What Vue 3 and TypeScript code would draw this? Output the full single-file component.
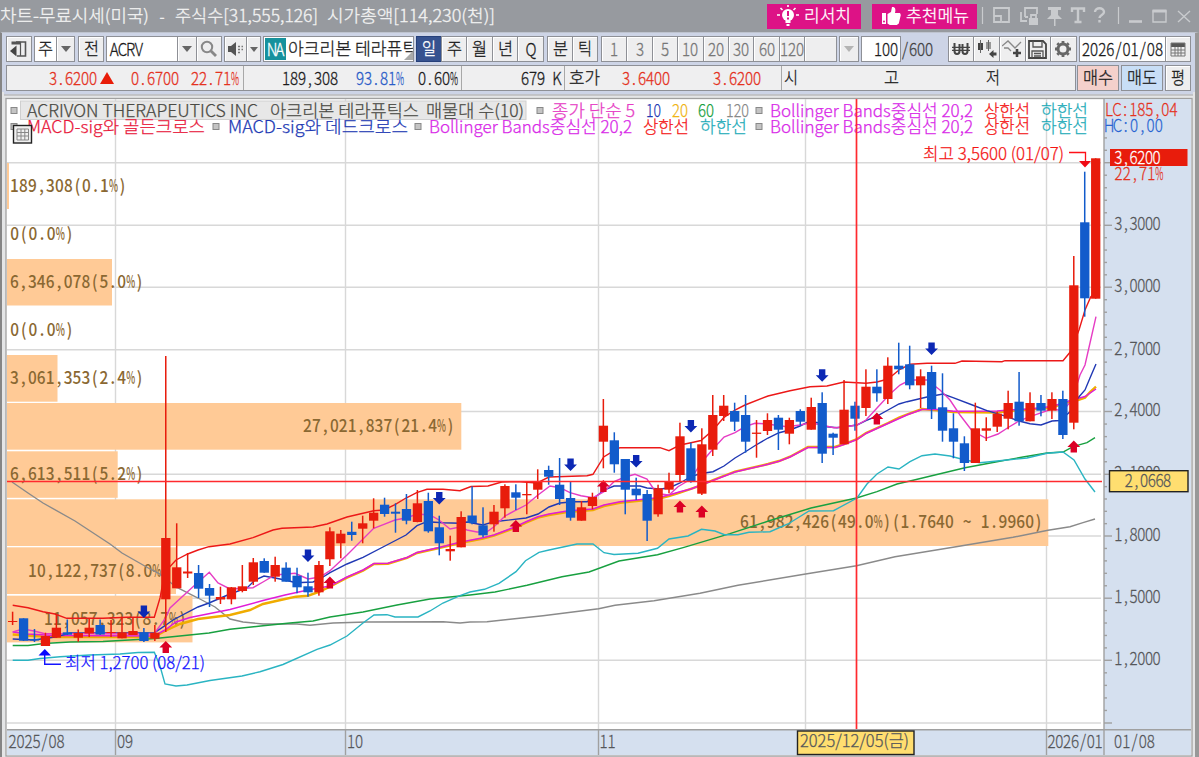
<script setup lang="ts">
import { h, type FunctionalComponent } from 'vue'

/* Half-width text: every character sits in its own equal cell. */
interface MonoProps { t: string; x?: number; y: number; w: number; k?: number }
const Mono: FunctionalComponent<MonoProps> = (p) => {
  const k = p.k ?? 0.84
  const cell = p.w / p.t.length / k
  let at = 0
  const runs = p.t.split(/(%)/).filter(Boolean).map((run) => {
    const start = at
    at += run.length
    if (run === '%') return h('text', { x: start * cell, y: 0, textLength: cell, lengthAdjust: 'spacingAndGlyphs' }, run)
    const xs = [...run].map((_, i) => ((start + i + 0.5) * cell).toFixed(2)).join(' ')
    return h('text', { x: xs, y: 0, 'text-anchor': 'middle' }, run)
  })
  return h('g', { transform: `translate(${p.x ?? 0} ${p.y}) scale(${k} 1)` }, runs)
}
Mono.props = ['t', 'x', 'y', 'w', 'k']

/* Text squeezed to a fixed advance inside the toolbars. */
interface FitProps { t: string; w: number; s?: number; ml?: number }
const Fit: FunctionalComponent<FitProps> = (p) => {
  const ascii = /^[\x20-\x7e]+$/.test(p.t)
  const s = p.s ?? (ascii ? 18 : 17)
  return h('svg', { class: 'fit', width: p.w, height: 20, 'font-size': s, style: { marginLeft: (p.ml ?? 0) + 'px' } }, [
    ascii
      ? h(Mono, { t: p.t, y: 10 + s * 0.365, w: p.w })
      : h('text', { x: 0, y: 10 + s * 0.37, textLength: p.w, lengthAdjust: 'spacingAndGlyphs' }, p.t),
  ])
}
Fit.props = ['t', 'w', 's', 'ml']

const periods = [
  { t: '주', w: 25 }, { t: '월', w: 26 }, { t: '년', w: 25 }, { t: 'Q', w: 26 },
]
const minutes = ['1', '3', '5', '10', '20', '30', '60', '120']

const STEP = 10.94
const X0 = 12.6
const cx = (i: number) => X0 + i * STEP

/* direction, high, low, body top, body bottom */
type Candle = [string, number, number, number, number]
const candles: Candle[] = [
  ['r', 611.7, 625, 621, 622], ['b', 618.3, 641, 618.3, 640.7], ['b', 629, 642, 639, 640.5], ['r', 632.7, 646, 636, 646],
  ['r', 614, 638, 627.7, 637.7], ['b', 619.5, 635, 632.3, 634.7], ['r', 629.5, 641.7, 633, 637.7], ['r', 618.5, 637, 627.7, 633.5],
  ['b', 619.5, 635, 625, 634.5], ['r', 620, 637, 632, 633], ['r', 617, 638.3, 632.3, 638.3], ['r', 618, 635, 631, 635],
  ['b', 628, 642, 632.3, 641], ['r', 625, 641, 632.7, 638.7], ['r', 356, 632, 538, 599.3], ['r', 523.3, 588.3, 567.3, 588.3],
  ['r', 553, 578, 571.5, 573.5], ['b', 565, 598, 573, 588.7], ['b', 584, 607, 588, 595.7], ['r', 586.7, 604, 597, 599.5],
  ['r', 587, 604.3, 587.3, 599.3], ['r', 565, 592.3, 586.3, 591], ['r', 558, 585, 562.3, 581.7], ['b', 558.3, 572.7, 561, 572.7],
  ['r', 556.7, 581.7, 565, 576.7], ['b', 562.3, 581.7, 567.7, 581.7], ['b', 567.7, 593.3, 575.7, 587.3], ['b', 572.7, 596.7, 586.3, 592.3],
  ['r', 561, 595.7, 565, 592.3], ['r', 527.3, 566, 531.3, 559.3], ['r', 530, 558.3, 533.7, 543.3], ['b', 521.7, 540.7, 531.8, 535],
  ['r', 515.7, 543.3, 523.3, 528.7], ['r', 498.3, 528.3, 512.7, 520.7], ['b', 497.7, 516.7, 504.7, 514], ['b', 503.3, 532.7, 511.7, 513.7],
  ['b', 494, 524.3, 509, 520.7], ['r', 490, 522.3, 503.3, 522], ['b', 492.7, 532.7, 501, 531.3], ['b', 515.7, 555.3, 527.3, 543.3],
  ['r', 535.7, 560.7, 549, 551.3], ['r', 511.3, 547.3, 517, 547.3], ['b', 486.3, 524.3, 515.5, 523], ['b', 507.3, 537.3, 525.3, 535.3],
  ['r', 505, 531.7, 511.7, 524.3], ['r', 484.3, 517.7, 486, 508.3], ['b', 484.3, 510, 492.3, 497.7], ['r', 481.7, 514.3, 494, 495.3],
  ['r', 469.3, 499, 482, 489.7], ['b', 465.7, 484.7, 470, 476.7], ['b', 458, 505, 484.7, 499], ['b', 481, 520.7, 498, 517.7],
  ['r', 501, 520.7, 507.3, 520.7], ['r', 492.7, 509.3, 497, 506], ['r', 399, 468.3, 425.7, 441.7], ['b', 432.3, 472.7, 440.3, 464.3],
  ['b', 459, 514.3, 459, 489.7], ['b', 477.7, 500, 488.7, 495.3], ['b', 490, 541, 494, 520.7], ['r', 484.7, 516.7, 488.3, 514.3],
  ['r', 472.7, 493.3, 481.7, 489.7], ['r', 422.7, 481, 436.3, 475], ['b', 442.7, 482.7, 448.3, 481], ['r', 428.3, 495, 444.3, 493.7],
  ['r', 395, 456, 415, 449.7], ['r', 395, 421, 405.7, 416], ['b', 402.7, 431, 411, 421.7], ['b', 395, 452.7, 415, 441.7],
  ['r', 420, 457.7, 432.6, 433.9], ['r', 413.3, 435, 420, 431], ['b', 415, 450, 417.7, 429.7], ['r', 417.7, 444.3, 420, 433.7],
  ['b', 409.3, 425.7, 411, 421.7], ['r', 397.7, 429.7, 407, 429.7], ['b', 392.3, 463, 403, 453.7], ['b', 432.7, 455, 433.7, 437.7],
  ['r', 380, 444.3, 409.7, 444.3], ['b', 401.7, 430.7, 405.7, 418.7], ['r', 369.3, 416, 386.7, 408], ['b', 369.3, 401.7, 386.7, 393.3],
  ['r', 357.3, 404, 365.7, 399], ['b', 342.7, 374.3, 365.7, 369.3], ['b', 345.7, 389.3, 364.3, 385.3], ['r', 369.3, 408, 376.3, 385.3],
  ['b', 365.7, 419, 372, 409], ['b', 373.3, 441.7, 407.3, 430.7], ['b', 413.3, 458.3, 428.3, 441.7], ['b', 436.3, 471, 443.3, 463],
  ['r', 402.7, 463, 428.3, 463], ['r', 417.3, 441, 428.3, 430.7], ['r', 411.7, 432, 413.7, 426.7], ['r', 390.7, 429.3, 403, 418.7],
  ['b', 372, 425.7, 401.7, 421.3], ['r', 392.3, 421.3, 403, 421.3], ['b', 395, 416.3, 403, 410.7], ['r', 392.3, 419, 399, 410.7],
  ['b', 390.7, 439, 399, 435], ['r', 256, 429.3, 285.3, 422.7], ['b', 171.7, 316.7, 222.3, 298.3], ['r', 158.3, 298.7, 158.3, 298.7],
]

interface Line { k: string; p: string }
const lines: Line[] = [
  { k: 'gray', p: '12,482 28,493 43,503 75,521 110,544 122,553 150,569 160,574 176,587 198,598 215,607 230,619 243,622 263,624 297,624 310,625.3 333,623 367,622 443,621.7 460,623 470,622 487,621.7 510,619.3 543,615.7 598.6,608.7 615,605.3 654,600.7 700,593.3 738,585.3 805.6,574 856.5,565.7 895,556.7 956,546.7 1013,537.3 1048,530.3 1070,526.7 1083,522.7 1095,519' },
  { k: 'green', p: '12.7,645.5 28,645.5 44,643.5 70,642 103,641.5 155,638.5 165,637.5 209,633 230,629.3 263,625.7 290,623 313,621 330,617 363,612 397,605 430,599 470,595 495,592 527,585.3 562,576.7 589,572 619,561 657.5,554.7 684,547.3 730,533.7 768.5,521 811,508 856.5,498 877,491.7 897,484 910,481 965,467.7 997,461.7 1023,457 1047,453 1063,452 1073,446.7 1087,442.7 1095,437.7' },
  { k: 'yellow', p: '12.7,634.5 34,636 55,637 154,637 165,631 180,624 198,619 230,615 250,610 263,604 285,599 296,596.7 308,595.7 319,592 330,586.7 347,577.7 363,570.7 374,564 388,563.7 407,558 417,553 439,548 460,543 483,538.7 494,535.5 515,528 526,522.7 538,517.7 549,515 567,512 593,510 604,506 620,502.7 646,500 658,498.7 669,496 680,492.7 701,485.5 713,480 735,471.7 768,464 779,461 790,456.7 808,447 835,447 844,444 857,439 866,433 877,428 888,423 899,417.7 908,414 922,409 940,410.5 953,412 997,412.5 1009,411 1030,409.5 1052,407.5 1063,403.5 1072,401 1078,400 1085,397.7 1090,392 1096,386.7' },
  { k: 'violet', p: '12.7,632 28,634 55,635.5 154,636 165,630 176,622 190,617.5 230,609.5 263,600.5 285,595 308,590 330,586 347,577 363,570 374,563.5 388,563.2 407,557.5 417,552.5 439,547.5 460,542.3 483,537.7 494,535 515,527 526,521.7 538,516.7 549,514 567,511 593,509 604,505 620,501.7 646,499 658,497.7 669,495 680,491.7 691,489 701,485 713,480.5 735,472 768,464.3 779,461.3 790,457 808,447.5 835,447.5 844,444.5 857,439.5 866,433.5 888,423.5 908,414.5 922,409.5 940,409.5 953,411.3 997,411 1009,410 1030,409 1052,406.5 1063,403 1072,400 1085,396.5 1096,389' },
  { k: 'blue', p: '12.7,639 34,640 55,637 70,633 154,633 165,625.7 173,620 198,607 209,603 230,594 247,588 255,580 264,576 275,578 285,580 296,582.7 313,582 320,579 330,572.7 347,564 363,557.3 383,547 406,535 417,525.7 427,521.7 443,522.7 460,523.3 467,522 483,525 494,521.7 526,518 538,514 549,507 560,503 573,501.7 587,501.7 593,499 604,490 614,486 640,486 647,488 660,489 669,488 680,483 691,476.7 701,473.5 713,471.7 724,466 735,458 745,452 756,445 768,438 779,432.7 790,430 800,426 808,422 817,422.5 827,426.7 837,427.7 857,425 866,420.7 877,416 888,410 899,404 907,401.7 927,397 943,394 953,397.7 975,406 987,410.7 1007,416.7 1019,421 1030,423.7 1041,425 1052,421 1060,420.5 1070,411.7 1078,398 1085,390 1090,378 1096,364' },
  { k: 'pink', p: '12.7,632 23,629 34,631 44,633.5 154,634 165,619 170,608 193,586.7 209.3,572.3 218,583 230,589 253,587.7 263,582 275,575 295,573.3 308,579 320,577 330,570.7 347,555 373.7,528.3 384,524.3 395,520 407,517.7 417,514 430,515 439,520 450,529 460,527 467,530 477,532 487,531.7 494,526.7 505,516 515,510.7 526,505 538,495 550,486 560,487.7 570,492.7 581,495.7 593,497.7 604,491.7 614,481.7 625,477 635,474.3 647,479 653,488 660,494 669,495 678,486.7 691,479 701,463 713,449 724,437 735,432.7 745,426.7 755,423.3 767,424 787,426.7 800,425 811,422.7 834,427.7 844,427 857,425 866,420 877,408 890,394 900,385 910,380 927,380 940,390 950,400 960,415 972,430.7 986,438.3 998,434 1009,427 1019,421 1030,416.7 1052,409 1063,410.7 1072,400 1080,375 1085,365 1090,343 1096,316.7' },
  { k: 'upper', p: '12.7,605.3 28,607.7 43,611.7 55,614 66.7,618.3 103,618.3 127,617.3 154.3,617.3 160,598 165,572 176,560 187.7,554 198,550 209,546.7 230,544 253,537.7 273,530 282,528.3 313,527 327,524 347,517 373.7,510.7 384,510 395,504.7 406,498 416.7,492.7 427,489.3 443,489.3 460,490.7 471,486.5 488,486 501.7,482 520,481.7 537,483 549,477 587,475.7 593,474.3 603.7,457 614,450.7 620,447.7 660,447.7 669,450.7 680,445 691,442.7 701,440.5 713,430 724,417.3 735,410 745,405 768,396 790,390.7 810,386.7 827,386 844,382 866,383.3 877,382 888,379 899,370 910,364.3 927,363.3 955,363.3 962,361 1002,361.7 1005,360.7 1063,360.7 1070,352.3 1079,330 1085,310 1090.7,297 1096,292' },
  { k: 'cyan', p: '12.7,660.3 28,660.3 40,658.5 60,656.7 90,655 120,654 138,652.5 154.3,652.3 160,666 165,684 176,686 187,685 210,680.5 242,676 260,671.7 283,664.5 317,649.3 330,645 347,636 363,623 374,615 387,614.7 395,617 418,617 430,611 443,603 460,595.7 470,592 484.5,589.3 499,583.3 516,571.7 525.5,560.7 539,552.3 549,550 577,544 593,544 604,552.7 614,554.5 638,553.3 657.5,548.3 669,539 688,536 701.5,529.3 715,531 724.5,534.7 738,534.7 749,532.3 770,531.7 788,524 809,511 833.5,510.7 857,498 867,484 877,474 888,467 899,469 910,461.7 922,455.7 935,454 950,456 965,460 980,462.7 1007,460 1027,458 1047,453.3 1063,452 1074,460 1085,479 1095,492' },
]

const bars = [
  { y: 163, hgt: 46, x2: 9 }, { y: 259, hgt: 46.5, x2: 112 }, { y: 355, hgt: 46.7, x2: 57.5 }, { y: 403, hgt: 46.7, x2: 461.3 },
  { y: 451.3, hgt: 46.5, x2: 117.7 }, { y: 499.3, hgt: 46.7, x2: 1048.3 }, { y: 547.3, hgt: 46.7, x2: 176 }, { y: 595.7, hgt: 46.7, x2: 192.5 },
]
interface Label { t: string; x: number; y: number; w: number; s?: number; k?: string }
const volumes: Label[] = [
  { t: '189,308(0.1%)', x: 10, y: 192, w: 117 }, { t: '0(0.0%)', x: 10, y: 240, w: 64 }, { t: '6,346,078(5.0%)', x: 10, y: 288, w: 134 },
  { t: '0(0.0%)', x: 10, y: 336, w: 64 }, { t: '3,061,353(2.4%)', x: 10, y: 384, w: 134 }, { t: '27,021,837(21.4%)', x: 303, y: 432.3, w: 152 },
  { t: '6,613,511(5.2%)', x: 10, y: 480.3, w: 134 }, { t: '61,982,426(49.0%)(1.7640 ~ 1.9960)', x: 740, y: 528.3, w: 303 },
  { t: '10,122,737(8.0%)', x: 28, y: 577, w: 142 }, { t: '11,057,323(8.7%)', x: 44, y: 625, w: 143 },
]
const legend: Label[] = [
  { t: 'ACRIVON THERAPEUTICS INC', x: 27, y: 117, w: 231, k: 'dark' }, { t: '아크리본 테라퓨틱스', x: 270, y: 116.5, w: 149, k: 'dark' },
  { t: '매물대 수(10)', x: 426, y: 116.5, w: 98, k: 'dark' }, { t: '종가 단순 5', x: 552, y: 116.5, w: 83, k: 'pink' },
  { t: '10', x: 646, y: 117, w: 15, k: 'blue' }, { t: '20', x: 672, y: 117, w: 16, k: 'yellow' }, { t: '60', x: 698, y: 117, w: 16, k: 'green' },
  { t: '120', x: 726, y: 117, w: 23, k: 'gray' }, { t: 'Bollinger Bands중심선 20,2', x: 770, y: 116.5, w: 203, k: 'violet' },
  { t: '상한선', x: 984, y: 116.5, w: 46, k: 'red' }, { t: '하한선', x: 1041, y: 116.5, w: 47, k: 'cyan' },
  { t: 'MACD-sig와 골든크로스', x: 27, y: 133, w: 178, k: 'crimson' }, { t: 'MACD-sig와 데드크로스', x: 228, y: 133, w: 180, k: 'blue' },
  { t: 'Bollinger Bands중심선 20,2', x: 429, y: 133, w: 203, k: 'violet' }, { t: '상한선', x: 643, y: 133, w: 46, k: 'red' }, { t: '하한선', x: 700, y: 133, w: 47, k: 'cyan' },
  { t: 'Bollinger Bands중심선 20,2', x: 770, y: 133, w: 203, k: 'violet' }, { t: '상한선', x: 984, y: 133, w: 46, k: 'red' }, { t: '하한선', x: 1041, y: 133, w: 47, k: 'cyan' },
]
const bullets = [[11, 107.5], [537, 107.5], [756, 107.5], [11, 123.5], [213, 123.5], [415, 123.5], [756, 123.5]]
const gridY = [162.7, 225.3, 287.2, 349.8, 411.5, 474.3, 536, 598.2, 660.3, 723]
const gridX = [115.5, 345.5, 598.5, 805.5, 1046.5]
const prices = ['3,3000', '3,0000', '2,7000', '2,4000', '2,1000', '1,8000', '1,5000', '1,2000']
const minor: number[] = []
for (let y = 150.3; y > 130; y -= 12.4) minor.push(y)
gridY.slice(0, -1).forEach((y, i) => { for (let k = 1; k < 5; k++) minor.push(y + ((gridY[i + 1] - y) * k) / 5) })
const dates: Label[] = [
  { t: '2025/08', x: 8.5, y: 748.3, w: 56 }, { t: '09', x: 117, y: 748.3, w: 16 }, { t: '10', x: 347, y: 748.3, w: 16 },
  { t: '11', x: 599.5, y: 748.3, w: 16 }, { t: '2026/01', x: 1047.5, y: 748.3, w: 55 }, { t: '01/08', x: 1114, y: 748.3, w: 41 },
]
const downs = [[12, 605.5], [27, 549.5], [39, 492], [51, 458.5], [57, 455], [62, 420], [74, 369.3], [84, 342.5]]
const ups = [[14, 641], [29, 576.5], [46, 520], [54, 480], [61, 500.5], [63, 505.5], [79, 412.5], [97, 440.5]]
</script>

<template>
  <div class="window">
    <header class="title">
      <Fit t="차트-무료시세(미국)" :w="149" /><Fit t="-" :w="8" :ml="9" />
      <Fit t="주식수[31,555,126]" :w="143" :ml="9" /><Fit t="시가총액[114,230(천)]" :w="168" :ml="9" />
      <div class="spacer"></div>
      <div class="promo first">
        <svg width="22" height="24" viewBox="0 0 22 24"><circle cx="11" cy="11" r="6" fill="#fff" /><path d="M8.5 15h5v4h-5zM9.5 20h3v2h-3z" fill="#fff" /><path d="M11 7v5M11 13.5v2" stroke="#dd1286" stroke-width="2" /><path d="M11 1v2M3.5 4l2 2M18.5 4l-2 2M0 11h3M19 11h3" stroke="#fff" stroke-width="1.6" /></svg>
        <Fit t="리서치" :w="47" :ml="5" />
      </div>
      <div class="promo second">
        <svg width="20" height="18" viewBox="0 0 20 18"><path d="M1 6h4v11H1zM6.5 7l3.5-2 1-5c3-.5 4 2 3 6h5l.8 2-2 8.5-2 1.5h-7l-2.300-1.500z" fill="#fff" /><circle cx="3" cy="14.500" r="1" fill="#dd1286" /></svg>
        <Fit t="추천메뉴" :w="63" :ml="5" />
      </div>
      <svg class="sys" width="222" height="32" viewBox="977 0 222 32" fill="none" stroke="#c9cbce" stroke-width="1.800">
        <path d="M982.500 7v17M1118.500 7v17" stroke-width="1.200" />
        <path d="M994 15V8h15v14h-7" /><path d="M994 16h7v6h-7z" />
        <path d="M1025 17V8h12v6M1021 12v9h6M1025 17h3" /><rect x="1029" y="18" width="9" height="7" fill="#c9cbce" stroke="none" /><path d="M1031 18v-3h5v3" />
        <path d="M1048 7h13v3h-3v5l4 4h-15l4-4v-5h-3zM1054 19h1.500v7h-1.500z" fill="#c9cbce" stroke="none" />
        <path d="M1072 12V8.500h12V12M1078 8v14M1074.500 22h7" stroke-width="2.400" />
        <path d="M1095 12c0-5 9-5 9 0 0 3-4.500 3-4.500 6M1099.500 20v2.500" stroke-width="2.400" />
        <path d="M1129 21.500h13" stroke-width="2.600" /><path d="M1153 11v11h13V11z" stroke-width="1.400" /><path d="M1152.500 11h14" stroke-width="3" />
        <path d="M1178 11l12 11M1190 11l-12 11" stroke-width="1.400" />
      </svg>
    </header>

    <div class="toolbar">
      <div class="box btn w26"><svg width="18" height="18" viewBox="0 0 18 18"><path d="M6 2h9.500v14H7" fill="none" stroke="#555" stroke-width="1.600" /><path d="M1.500 1.500h9v3h-9z" fill="#555" /><path d="M10.500 2v14" stroke="#555" stroke-width="1.200" /><path d="M0 11l6.500-5.500v11z" fill="#444" /></svg></div>
      <div class="box white combo"><Fit t="주" :w="15" /></div><div class="box btn w19 join"><i class="caret"></i></div>
      <div class="box btn w26 g3"><Fit t="전" :w="15" /></div>
      <div class="box white ticker"><Fit t="ACRV" :w="33" /></div><div class="box btn w20 join"><i class="caret"></i></div>
      <div class="box btn w26 join"><svg width="18" height="18" viewBox="0 0 18 18" fill="none" stroke="#888" stroke-width="2"><circle cx="7" cy="7" r="5.200" /><path d="M11 11l5 5" stroke-width="2.800" /></svg></div>
      <div class="box btn w24 g2"><svg width="18" height="16" viewBox="0 0 18 16"><path d="M1 5h3l5-4v14l-5-4H1z" fill="#555" /><path d="M11 5.500h2M11 8.500h2M11 11.500h2M14.500 5.500h1.500M14.500 8.500h1.500" stroke="#777" stroke-width="1.500" /></svg></div>
      <div class="box btn w15 join"><i class="caret small"></i></div>
      <div class="box white name"><span class="na"><Fit t="NA" :w="16" /></span><Fit t="아크리본 테라퓨틱스" :w="146" :ml="2" /><i class="corner"></i></div>
      <div class="box on w26"><Fit t="일" :w="14" /></div>
      <div v-for="p in periods" :key="p.t" class="box btn join" :style="{ width: p.w + 1 + 'px' }"><Fit :t="p.t" :w="p.t === 'Q' ? 8 : 15" /></div>
      <div class="box btn w26 g3"><Fit t="분" :w="15" /></div><div class="box btn w26 join"><Fit t="틱" :w="14" /></div>
      <div class="minutes">
        <div v-for="m in minutes" :key="m" class="box btn dim"><Fit :t="m" :w="m.length * 8" /></div>
        <div class="box btn dim rest"></div>
      </div>
      <div class="box btn w20 g2"><i class="caret pale"></i></div>
      <div class="box white count"><Fit t="100" :w="24" /></div><span class="total"><Fit t="/600" :w="32" /></span>
      <div class="box btn w26 tools"><svg width="18" height="16" viewBox="0 0 18 16" fill="none" stroke="#444" stroke-width="2"><path d="M2.500 2v8c0 4 5 4 5 0V3M10.500 3v7c0 4 5 4 5 0V2" /><path d="M0 6.300h18M0 9.300h18" stroke-width="1.200" /></svg></div>
      <div class="box btn w26 join"><svg width="20" height="18" viewBox="0 0 20 18"><path d="M1 3h5v7H1z" fill="#444" /><path d="M9 2h5v7H9z" fill="#999" /><path d="M3.500 0v13M11.500 0v11" stroke="#666" /><path d="M12 14l4.500-4v2.500h3v3h-3V18z" fill="#444" /></svg></div>
      <div class="box btn w27 join"><svg width="20" height="18" viewBox="0 0 20 18" fill="none"><path d="M0 6l6-5 7 7 6-6M2 8h4l3 3" stroke="#888" stroke-width="1.300" /><path d="M15 9v8M11 13h8" stroke="#444" stroke-width="2.600" /></svg></div>
      <div class="box btn w26 join"><svg width="19" height="19" viewBox="0 0 19 19"><path d="M1 1h14l3 3v14H1z" fill="none" stroke="#444" stroke-width="1.800" /><path d="M5 1v6h9V1M4 18v-7h11v7M6 13.500h7M6 16h7" fill="none" stroke="#555" stroke-width="1.300" /></svg></div>
      <div class="box btn w26 join"><svg width="18" height="18" viewBox="0 0 18 18"><circle cx="9" cy="9" r="5" fill="none" stroke="#666" stroke-width="3" /><g stroke="#666" stroke-width="2.800"><path d="M9 1v2M9 15v2M1 9h2M15 9h2M3.300 3.300l1.500 1.500M13.200 13.200l1.500 1.500M3.300 14.700l1.500-1.500M13.200 4.800l1.500-1.500" /></g></svg></div>
      <div class="box white date"><Fit t="2026/01/08" :w="81" /></div>
      <div class="box btn w26 join"><svg width="16" height="15" viewBox="0 0 16 15"><path d="M1 1h14v4H1z" fill="#555" /><path d="M1 1h14v13H1zM1 8h14M1 11h14M5 5v9M8 5v9M11 5v9" fill="none" stroke="#777" /></svg></div>
    </div>

    <div class="quote">
      <div class="box strip">
        <div class="cell c1 up"><Fit t="3.6200" :w="48" /><svg class="tri" width="14" height="12"><path d="M7 0l7 12H0z" fill="#e81c08" /></svg><Fit t="0.6700" :w="48" :ml="17" /><Fit t="22.71%" :w="48" :ml="12" /></div>
        <div class="cell c2"><Fit t="189,308" :w="56" /><Fit class="down" t="93.81%" :w="48" :ml="18" /><Fit t="0.60%" :w="40" :ml="14" /></div>
        <div class="cell c3"><Fit t="679 K" :w="40" /></div>
        <div class="cell c4"><Fit t="호가" :w="31" /><Fit class="up" t="3.6400" :w="48" :ml="22" /><Fit class="up" t="3.6200" :w="48" :ml="43" /></div>
        <div class="cell c5"><Fit t="시" :w="14" /><Fit t="고" :w="15" :ml="86" /><Fit t="저" :w="14" :ml="87" /></div>
      </div>
      <div class="box buy"><Fit t="매수" :w="30" /></div>
      <div class="box sell"><Fit t="매도" :w="30" /></div>
      <div class="box btn w26 avg"><Fit t="평" :w="14" /></div>
    </div>

    <svg class="chart" width="1199" height="665" viewBox="0 92 1199 665">
      <rect x="0" y="92" width="1199" height="665" fill="#e4e5e6" />
      <rect x="4" y="92" width="1189" height="2.500" fill="#cdd4e6" />
      <path d="M4 95h1189" stroke="#a8a8a8" stroke-width="1.200" />
      <rect x="0" y="92" width="2" height="665" fill="#858585" />
      <rect x="1195" y="92" width="4" height="665" fill="#989898" />
      <rect x="6" y="98.500" width="1186" height="657.500" fill="#fff" stroke="#a0a0a0" stroke-width="1.300" />
      <rect x="1104" y="99" width="87" height="631" fill="#d5e0ef" />
      <rect x="7" y="730" width="1184" height="25" fill="#d5e0ef" />
      <g stroke="#d8d8d8" stroke-width="1.400">
        <line v-for="y in gridY" :key="y" x1="7" :y1="y" x2="1101" :y2="y" />
        <line v-for="x in gridX" :key="x" :x1="x" y1="99" :x2="x" y2="729" />
      </g>
      <rect v-for="b in bars" :key="b.y" x="7" :y="b.y" :width="b.x2 - 7" :height="b.hgt" fill="#ffca96" />
      <Mono v-for="v in volumes" :key="v.y + v.t" class="vol" :t="v.t" :x="v.x" :y="v.y" :w="v.w" :k="0.88" />

      <g><polyline v-for="l in lines" :key="l.k" :class="['ln', l.k]" :points="l.p" /></g>
      <g v-for="(c, i) in candles" :key="i" :fill="c[0] === 'r' ? '#e81c0c' : '#125bcb'">
        <rect :x="cx(i) - 0.75" :y="c[1]" width="1.500" :height="c[2] - c[1]" />
        <rect :x="cx(i) - 4.600" :y="c[3]" width="9.300" :height="c[4] - c[3]" />
      </g>
      <path v-for="a in downs" :key="'d' + a[0]" :transform="`translate(${cx(a[0])} ${a[1]})`" d="M-3.200 0h6.400v6h3.200L0 12.500-6.400 6h3.200z" fill="#0c28b4" />
      <path v-for="a in ups" :key="'u' + a[0]" :transform="`translate(${cx(a[0])} ${a[1]})`" d="M-3.200 12h6.400v-5.500h3.200L0 0-6.400 6.500h3.200z" fill="#dc0026" />

      <rect x="20.500" y="101" width="505.500" height="18.500" fill="#e7e7e7" stroke="#cfcfcf" />
      <rect v-for="(b, i) in bullets" :key="i" :x="b[0]" :y="b[1]" width="6" height="6" fill="#c4c4c4" stroke="#888" />
      <text v-for="(l, i) in legend" :key="'l' + i" :class="['tx', 'f-' + l.k, { num: /^\d+$/.test(l.t) }]" :x="l.x" :y="l.y" :textLength="l.w" lengthAdjust="spacingAndGlyphs">{{ l.t }}</text>
      <rect x="13.500" y="125.500" width="18" height="17.500" fill="#f0f0f0" stroke="#222" stroke-width="1.400" />
      <path d="M17 129h11.500v11H17zM17 132.500h11.500M17 136h11.500M21 129v11M24.800 129v11" fill="none" stroke="#888" />

      <text class="tx f-red" x="923" y="160" textLength="141" lengthAdjust="spacingAndGlyphs">최고 3,5600 (01/07)</text>
      <path d="M1069 152.500h16.500v9" fill="none" stroke="#ff1018" stroke-width="1.300" /><path d="M1079 161h12l-6 6.500z" fill="#f00a14" />
      <text class="tx f-info" x="65" y="669" textLength="140" lengthAdjust="spacingAndGlyphs">최저 1,2700 (08/21)</text>
      <path d="M61 664.300H44.700V655" fill="none" stroke="#1414ff" stroke-width="1.400" /><path d="M38.500 655.500h12.500l-6.200-6.500z" fill="#0808ff" />

      <path d="M856.500 99V729" stroke="#ff2a2e" stroke-width="1.700" />
      <path d="M7 481.500H1102" stroke="#ff2a2e" stroke-width="1.700" />

      <g stroke="#a0a0a0" stroke-width="1.400">
        <path d="M1104 99v656M7 729.700H1191" />
        <line v-for="x in [115.5, 345.5, 598.5, 1046.500]" :key="x" :x1="x" y1="730" :x2="x" y2="755" />
        <line v-for="y in gridY" :key="'t' + y" x1="1104" :y1="y" x2="1112" :y2="y" />
        <line v-for="y in minor" :key="'m' + y" x1="1104" :y1="y" x2="1107" :y2="y" />
      </g>
      <Mono v-for="(p, i) in prices" :key="p" class="tx num f-axis" :t="p" :x="1114.500" :y="gridY[i + 1] + 4.800" :w="46" />
      <Mono class="tx num f-up" t="LC:185,04" :x="1105" :y="116" :w="72.500" />
      <Mono class="tx num f-hc" t="HC:0,00" :x="1105" :y="132" :w="58" />
      <rect x="1110" y="149" width="77.500" height="17" fill="#e81c0c" />
      <Mono class="tx num f-white" t="3,6200" :x="1114.500" :y="164" :w="46" />
      <Mono class="tx num f-up" t="22,71%" :x="1114.500" :y="180" :w="49" />
      <rect x="1109.500" y="470.700" width="78.500" height="21" fill="#ffde70" stroke="#222" stroke-width="1.400" />
      <Mono class="tx num f-axis" t="2,0668" :x="1125" :y="486.800" :w="46" />
      <Mono v-for="d in dates" :key="d.x" class="tx num f-axis" :t="d.t" :x="d.x" :y="d.y" :w="d.w" />
      <rect x="797.500" y="731" width="116.500" height="23.500" fill="#ffde70" stroke="#222" stroke-width="1.400" />
      <text class="tx f-axis" x="800" y="747" textLength="109" lengthAdjust="spacingAndGlyphs">2025/12/05(금)</text>
    </svg>
  </div>
</template>

<style>
body { margin: 0; overflow: hidden; }
.fit { display: block; flex: none; overflow: visible; }
.fit text { fill: currentColor; stroke: currentColor; stroke-width: 0.3px; }
</style>

<style scoped>
.window { width: 1199px; height: 757px; overflow: hidden; background: #cdd4e6; color: #1c1c1c; font-family: "Noto Sans CJK KR", "Liberation Sans", sans-serif; font-weight: 300; box-sizing: border-box; }
.title { height: 32px; display: flex; align-items: center; background: #979a9f; color: #f2f2f2; }
.spacer { flex: 1; }
.promo { height: 25px; display: flex; align-items: center; box-sizing: border-box; background: #dd1286; color: #fff; }
.first { width: 94px; padding-left: 10px; margin-right: 11px; }
.second { width: 105px; padding-left: 9px; }
.sys { display: block; flex: none; }
.toolbar { height: 33px; display: flex; align-items: center; box-sizing: border-box; padding: 0 0 0 4px; border-left: 2px solid #858585; border-right: 4px solid #989898; border-top: 1px solid #bfc4cf; }
.quote { height: 27px; display: flex; align-items: flex-start; box-sizing: border-box; padding-left: 4px; border-left: 2px solid #858585; border-right: 4px solid #989898; }
.box { height: 26px; box-sizing: border-box; flex: none; display: flex; align-items: center; justify-content: center; border: 1px solid #8e9096; }
.btn { background: #eeeeef; box-shadow: inset 1px 1px 0 #fff; }
.white { background: #fff; }
.join { margin-left: -1px; }
.w15 { width: 15px; } .w19 { width: 19px; } .w20 { width: 20px; } .w24 { width: 23px; } .w26 { width: 26px; } .w27 { width: 27px; }
.tools, .tools ~ .join.w26 { width: 26.400px; }
.g2 { margin-left: 2px; } .g3 { margin-left: 3px; }
.combo { width: 23px; margin-left: 2px; }
.ticker { width: 72px; margin-left: 2px; justify-content: flex-start; padding-left: 3px; }
.name { width: 151px; margin-left: 2px; margin-right: 2px; justify-content: flex-start; overflow: hidden; padding-left: 1px; position: relative; }
.na { width: 21px; height: 22px; flex: none; background: #16919d; color: #fff; display: flex; align-items: center; justify-content: center; }
.corner { position: absolute; right: 0; bottom: 1px; border-left: 9px solid transparent; border-bottom: 9px solid #aaa; }
.on { background: #36528f; color: #fff; border-color: #26407a; }
.minutes { display: flex; margin-left: 3px; width: 236px; }
.dim { width: 26.400px; margin-right: -1px; color: #777; overflow: hidden; }
.rest { flex: 1; margin-right: 0; }
.caret { border: 5px solid transparent; border-top: 6px solid #666; border-bottom: 0; }
.small { border-width: 5px 4px 0; }
.pale { border-top-color: #b4b4b4; }
.count { width: 40px; margin-left: 2px; justify-content: flex-end; padding-right: 2px; }
.total { width: 47px; color: #444; }
.date { width: 87px; margin-left: 2px; }
.strip { width: 1070px; background: #efeff0; justify-content: flex-start; }
.cell { display: flex; align-items: center; height: 24px; box-sizing: border-box; border-right: 1px solid #a8a8a8; }
.cell.c5 { border-right: 0; padding-left: 2px; }
.c1 { width: 237px; padding-left: 42px; }
.c2 { width: 218px; padding-left: 38px; }
.c3 { width: 103px; padding-left: 59px; }
.c4 { width: 217px; padding-left: 4px; }
.tri { margin-left: 3px; flex: none; }
.up { color: #e4321e; }
.down { color: #2a5cc8; }
.buy { width: 42px; margin-left: 1px; background: #f4d0cb; }
.sell { width: 42px; margin-left: 2px; background: #c8def6; }
.avg { margin-left: 2px; }
.chart { display: block; }
.tx { font-size: 17px; stroke-width: 0.250px; }
.tx.num { font-size: 18px; }
.vol { font-size: 17.500px; font-weight: 500; fill: #8a6832; }
.ln { fill: none; stroke-width: 1.400; }
.gray { stroke: #8a8a8a; } .green { stroke: #18a040; } .yellow { stroke: #f0ac00; stroke-width: 2.400; } .violet { stroke: #e01cd8; stroke-width: 1.500; }
.blue { stroke: #2038b4; } .pink { stroke: #e63cc4; } .upper { stroke: #ec1818; } .cyan { stroke: #2ab4c2; }
.f-dark { fill: #4a4a44; stroke: #4a4a44; } .f-pink { fill: #e63cc4; stroke: #e63cc4; } .f-blue { fill: #2038b4; stroke: #2038b4; }
.f-yellow { fill: #f0b414; stroke: #f0b414; } .f-green { fill: #18a040; stroke: #18a040; } .f-gray { fill: #888; stroke: #888; }
.f-violet { fill: #d828e8; stroke: #d828e8; } .f-red { fill: #f41414; stroke: #f41414; } .f-cyan { fill: #1cabb8; stroke: #1cabb8; }
.f-crimson { fill: #e8183c; stroke: #e8183c; } .f-info { fill: #1414ff; stroke: #1414ff; } .f-axis { fill: #55575a; stroke: #55575a; }
.f-up { fill: #e4321e; stroke: #e4321e; } .f-hc { fill: #2864d2; stroke: #2864d2; } .f-white { fill: #fff; stroke: #fff; }
</style>
